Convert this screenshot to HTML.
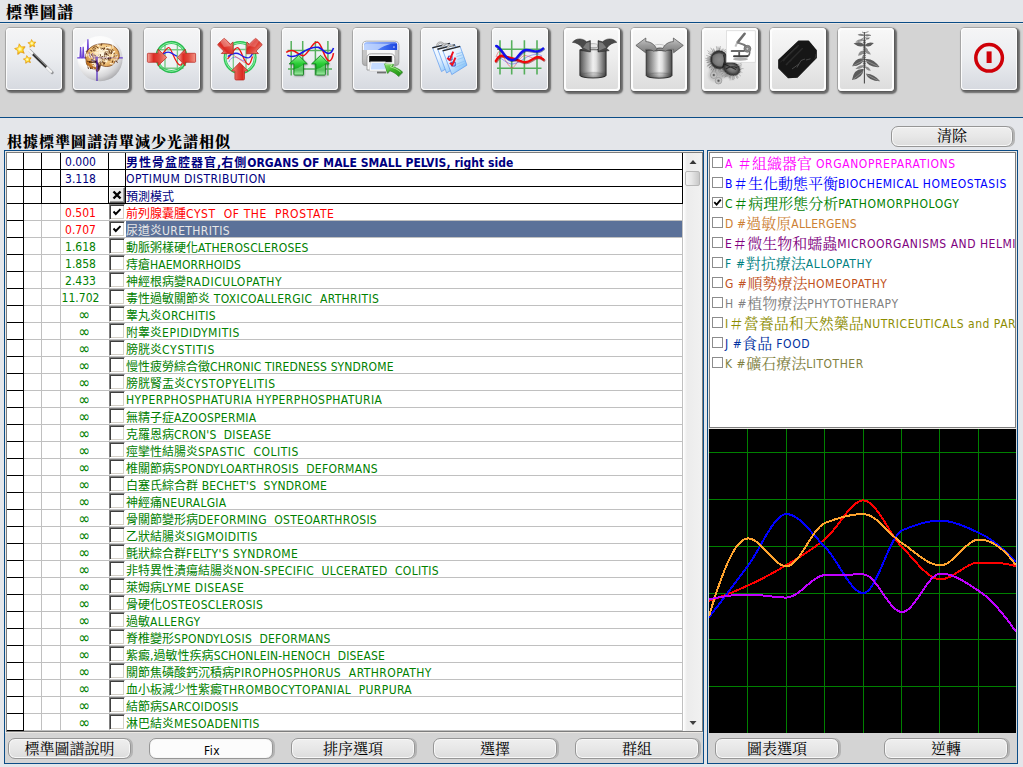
<!DOCTYPE html>
<html lang="zh-Hant"><head><meta charset="utf-8"><title>標準圖譜</title>
<style>
*{box-sizing:border-box;margin:0;padding:0}
html,body{width:1023px;height:767px;overflow:hidden}
body{background:#e4e6ea;font-family:"Liberation Sans","Noto Sans CJK TC",sans-serif;position:relative}
.abs{position:absolute}
#title{position:absolute;left:6px;top:2px;font:900 16px/22px "Liberation Serif","Noto Serif CJK SC",serif;color:#000;letter-spacing:1px;white-space:nowrap}
#sub{position:absolute;left:7px;top:131px;font:900 15px/22px "Liberation Serif","Noto Serif CJK SC",serif;color:#000;letter-spacing:1px;white-space:nowrap}
#l1{position:absolute;left:0;top:22px;width:1023px;height:1px;background:#0b4c86}
#l1b{position:absolute;left:0;top:23px;width:1023px;height:1px;background:#e9e6e3}
#tb{position:absolute;left:0;top:24px;width:1023px;height:93px;background:#d4d4d4}
#l2{position:absolute;left:0;top:117px;width:1023px;height:1px;background:#0b4c86}
.tbtn{position:absolute;top:28px;width:56px;height:62px;border-radius:4px;background:linear-gradient(#f5f5f6,#eceef1 45%,#d6d9e0);box-shadow:inset 0 0 0 1px #fcfcfc,0 0 0 1px rgba(0,0,0,.13),1.5px 1.5px 1.5px 1px rgba(0,0,0,.5)}
.tbtn.gr{height:63px;background:linear-gradient(#f8f8f8,#eeeeee 45%,#dcdcdc);box-shadow:inset 0 0 0 2px #fdfdfd,0 0 0 1px rgba(0,0,0,.15),1.5px 1.5px 1.5px 1px rgba(0,0,0,.5)}
.tbtn svg{position:absolute;left:0;top:0}
.btn{position:absolute;height:21px;border:1px solid #969696;border-radius:7px;background:linear-gradient(#efefef,#e7e7e7 50%,#dcdcdc);box-shadow:2px 0 0 #b4b4b4, inset 0 0 0 1px #f8f8f8;font:15px/19px "Liberation Serif","Noto Serif CJK SC",serif;text-align:center;color:#000;white-space:nowrap}
.btn.bb{line-height:21px}
.btn.fix{background:#fcfcfc;font:12px/24px "DejaVu Sans Condensed","DejaVu Sans","Liberation Sans",sans-serif;font-stretch:condensed;padding-left:2px;letter-spacing:.5px}
.panel{position:absolute;top:150px;height:614px;border:1px solid #0b4c86;background:#d4d4d4;overflow:hidden}
#lp{left:4px;width:700px}
#rp{left:707px;width:311px}
.sunk{position:absolute;border:1px solid #7d7d7d;box-shadow:0 0 0 1px #ebe8e4;background:#fff;overflow:hidden}
/* grid */
#grid{left:1px;top:1px;width:697px;height:580px}
.r{position:absolute;left:0;width:676px;height:17px;border-bottom:1px solid #c0c0c0;white-space:nowrap}
.r::before{content:"";position:absolute;left:0;top:16px;width:17px;height:1px;background:#000}
.r .n{position:absolute;left:50px;width:47px;top:1px;height:16px;font:12px/16px "DejaVu Sans Condensed","DejaVu Sans","Liberation Sans",sans-serif;font-stretch:condensed;text-align:center}
.r .n.inf{left:54px;font-size:16px;line-height:16px}
.r .t{position:absolute;left:119px;top:0;height:16px;right:0;font-size:12px;line-height:18px;overflow:hidden}
.r.sel .t{background:#5b7199;color:#e8e8e8}
.r.bold .t{font-weight:bold}
.l{font-family:"DejaVu Sans Condensed","DejaVu Sans","Liberation Sans",sans-serif;font-stretch:condensed;font-size:12px}
.c{font-family:"Noto Sans CJK TC",sans-serif;font-size:12px}
.r.bold .c{font-family:"Noto Sans CJK TC",sans-serif;font-weight:bold;letter-spacing:1px}
.vl{position:absolute;top:0;width:1px}
.cb{position:absolute;left:102px;top:0;width:16px;height:16px;background:#fff;border-top:1px solid #808080;border-left:1px solid #808080;border-right:1px solid #fff;border-bottom:1px solid #fff;box-shadow:inset 1px 1px 0 #404040, inset -1px -1px 0 #d4d0c8}
.cb svg{position:absolute;left:1px;top:1px}
.xb{position:absolute;left:102px;top:0;width:16px;height:16px;background:#ececec;border-top:1px solid #fff;border-left:1px solid #fff;border-right:1px solid #606060;border-bottom:1px solid #606060;box-shadow:inset -1px -1px 0 #a0a0a0}
.xb svg{position:absolute;left:0;top:0}
#sb{position:absolute;left:677px;top:0;width:18px;height:578px;background:linear-gradient(90deg,#fbfbfb 0,#ececec 3px,#f1f1f1 100%)}
#thumb{position:absolute;left:1px;top:18px;width:15px;height:15px;border:1px solid #b8b8b8;border-radius:2px;background:linear-gradient(90deg,#f4f4f4,#e6e6e6 45%,#c8c8c8)}
/* categories */
#list{left:1px;top:1px;width:307px;height:276px}
.k{position:absolute;left:0;width:400px;height:20px;white-space:nowrap}
.kb{position:absolute;left:2px;top:4px;width:11px;height:11px;border:1px solid #8c8c8c;background:#fff}
.kt{position:absolute;left:15px;top:-1px;height:20px;line-height:20px;font-size:12px}
.kt .c{font-family:"Noto Serif CJK SC",serif;font-size:15px;position:relative;top:1px}
#chart{position:absolute;left:1px;top:278px;width:307px;height:304px;background:#000}
</style></head><body>
<div id="title">標準圖譜</div>
<div id="l1"></div><div id="l1b"></div><div id="tb"></div><div id="l2"></div>
<div class="tbtn" style="left:6px"><svg width="56" height="62" viewBox="0 0 56 62"><defs><radialGradient id="sg" cx=".5" cy=".5" r=".55"><stop offset="0" stop-color="#fffde0"/><stop offset=".45" stop-color="#ffe030"/><stop offset="1" stop-color="#e88a00"/></radialGradient>
<filter id="bl1" x="-30%" y="-30%" width="160%" height="160%"><feGaussianBlur stdDeviation=".7"/></filter></defs>
<path d="M23.6 22.4 L46.2 44.6" stroke="#000" stroke-opacity=".35" stroke-width="3" stroke-linecap="round" filter="url(#bl1)"/>
<path d="M22.3 21.6 L45 43.6" stroke="#f4f4f4" stroke-width="2.6" stroke-linecap="round"/>
<path d="M27 26.2 L40.4 39.2" stroke="#2e2e2e" stroke-width="2.5"/>
<path d="M27.5 25.7 L40.9 38.7" stroke="#9a9a9a" stroke-width=".8"/>
<g filter="url(#bl1)" opacity=".5"><path d="M13.49 16.09 L15.73 19.28 L19.62 19.08 L17.27 22.19 L18.67 25.83 L14.99 24.56 L11.96 27.01 L12.03 23.11 L8.76 20.99 L12.49 19.85 Z" fill="#c08000"/><path d="M25.83 11.72 L27.28 14.20 L30.16 14.32 L28.25 16.47 L29.02 19.25 L26.38 18.09 L23.99 19.69 L24.27 16.82 L22.01 15.03 L24.82 14.42 Z" fill="#c08000"/><path d="M21.05 27.77 L22.72 30.11 L25.60 29.98 L23.88 32.29 L24.89 34.99 L22.16 34.07 L19.92 35.86 L19.95 32.99 L17.54 31.40 L20.29 30.54 Z" fill="#c08000"/></g>
<path d="M13.11 15.69 L15.28 18.87 L19.13 18.62 L16.77 21.68 L18.20 25.26 L14.57 23.96 L11.60 26.42 L11.72 22.57 L8.46 20.51 L12.16 19.42 Z" fill="url(#sg)" stroke="#e79a10" stroke-width=".5"/>
<path d="M25.53 11.42 L26.93 13.89 L29.77 13.96 L27.85 16.05 L28.66 18.77 L26.07 17.59 L23.74 19.20 L24.06 16.38 L21.81 14.66 L24.59 14.09 Z" fill="url(#sg)" stroke="#e79a10" stroke-width=".5"/>
<path d="M20.67 27.46 L22.28 29.80 L25.11 29.63 L23.38 31.88 L24.42 34.52 L21.75 33.57 L19.56 35.37 L19.63 32.54 L17.24 31.02 L19.96 30.21 Z" fill="url(#sg)" stroke="#e79a10" stroke-width=".5"/>
</svg></div>
<div class="tbtn" style="left:73px"><svg width="56" height="62" viewBox="0 0 56 62"><defs><radialGradient id="sp2" cx=".36" cy=".28" r=".85"><stop offset="0" stop-color="#ffffff"/><stop offset=".5" stop-color="#fbfbfb"/><stop offset=".75" stop-color="#d4d4d6"/><stop offset="1" stop-color="#8e8e92"/></radialGradient>
<radialGradient id="br2" cx=".5" cy=".38" r=".68"><stop offset="0" stop-color="#fffaea"/><stop offset=".45" stop-color="#f6cf8c"/><stop offset=".8" stop-color="#d08a38"/><stop offset="1" stop-color="#8a4812"/></radialGradient>
<filter id="bl2" x="-30%" y="-30%" width="160%" height="160%"><feGaussianBlur stdDeviation=".45"/></filter></defs>
<circle cx="27" cy="30.7" r="22.6" fill="url(#sp2)"/>
<path d="M4.2 29.9 H7 L7.6 19 L8.3 29.9 H9.6 L10.2 18.7 L10.9 29.9 H14.2 L14.9 11.3 L15.7 29.9 H20 M44.5 29.9 H49.8" fill="none" stroke="#5a2cd0" stroke-width="1.2" opacity=".9"/>
<g filter="url(#bl2)">
<path d="M13 32 C11.5 27 14 21.5 19 18.5 C24 15.5 31 15 37 16.5 C43 18 46.5 23 46.3 28 C46.2 31 44.5 32.8 42 33 C41.5 36.5 38 38.5 33.5 38.5 C31 38.5 29 37.8 27.5 37 C27.3 39 26.5 42 25 43.5 L23 43 C23.5 42 23.5 41.5 23 41 C19 41.5 15 39.5 13.8 36.5 C13.2 35 13 33.5 13 32 Z" fill="url(#br2)" stroke="#5a2404" stroke-width=".6"/>
<path d="M28.0 29.3 Q29.1 29.0 30.1 28.3M19.7 28.3 Q17.5 26.6 17.8 26.2M16.8 34.8 Q18.0 35.5 16.3 33.3M34.3 30.5 Q34.8 29.9 35.1 31.8M19.9 22.3 Q20.8 23.6 22.1 22.8M30.1 31.1 Q28.7 30.4 27.5 31.1M40.0 32.6 Q39.0 32.1 39.3 34.3M37.8 25.8 Q39.7 26.0 39.0 24.0M42.2 27.3 Q42.0 27.6 44.4 27.1M38.1 22.9 Q40.4 24.2 39.9 24.0M17.7 22.4 Q19.2 21.9 18.9 23.4M31.3 26.8 Q30.7 28.6 32.3 29.4M17.6 26.3 Q19.3 28.1 18.1 28.2M23.4 36.5 Q24.8 37.9 24.0 38.6M17.1 38.8 Q18.2 39.2 17.6 40.7M23.2 18.6 Q23.5 19.6 25.3 20.0M25.5 27.0 Q26.9 27.8 27.8 26.4M19.7 20.4 Q20.1 18.7 22.1 18.8M20.1 37.9 Q20.8 35.9 22.0 36.2M15.2 38.2 Q14.6 40.5 15.4 40.9M32.5 23.5 Q31.8 23.9 33.7 25.9M31.3 35.8 Q31.8 34.2 29.8 34.5M14.5 22.9 Q12.8 22.8 13.0 23.5M31.7 19.9 Q32.2 21.5 29.8 22.2M35.4 29.9 Q34.5 31.7 36.4 31.1M28.9 33.1 Q27.0 34.7 27.6 36.0M36.8 32.5 Q36.8 31.6 37.7 29.5M26.9 34.4 Q28.1 33.1 28.5 32.5M32.1 30.4 Q34.7 32.2 34.3 31.6M36.6 25.5 Q36.3 25.3 36.3 23.1M16.6 33.5 Q17.8 32.9 19.1 34.0M35.6 27.9 Q33.8 25.5 33.3 25.9M23.3 31.9 Q24.8 33.3 23.9 33.6M27.7 36.6 Q26.2 37.6 26.5 38.9M41.3 25.5 Q39.3 24.9 39.5 24.4M22.6 20.7 Q20.8 20.8 20.7 21.3M33.4 27.9 Q34.3 29.1 32.2 30.5M36.0 29.6 Q34.0 29.8 34.9 32.2M28.1 17.5 Q27.5 15.3 29.0 15.9M33.5 26.8 Q33.5 27.2 31.7 24.9M35.2 21.4 Q32.9 21.4 33.4 21.7M36.1 20.9 Q36.6 22.0 35.8 23.0M33.0 33.6 Q33.2 33.3 30.8 35.4M42.9 32.9 Q44.1 34.9 44.5 34.5M25.7 29.5 Q28.0 28.4 27.7 27.5M34.2 21.5 Q34.4 20.7 33.7 18.7" fill="none" stroke="#4a1c02" stroke-width=".9" opacity=".9" stroke-linecap="round"/><path d="M33.3 33.3 Q34.5 33.1 34.2 30.3M14.9 27.2 Q17.3 25.6 17.3 26.3M28.5 22.4 Q25.9 21.2 26.2 21.8M22.7 37.2 Q23.6 35.2 22.8 35.4M33.1 19.8 Q33.8 19.0 36.1 19.8M23.0 38.2 Q20.8 39.2 20.4 37.5M41.7 23.6 Q40.1 23.0 40.6 24.9M23.3 30.3 Q24.2 29.7 26.0 30.3M39.4 27.6 Q39.5 27.3 38.4 29.7M37.2 35.6 Q38.3 36.0 40.1 35.9M19.6 38.0 Q21.4 40.7 20.5 40.6M24.7 24.8 Q22.1 25.3 21.9 24.4M15.1 37.8 Q16.3 39.6 16.9 38.9M24.5 37.3 Q23.0 36.1 22.6 36.8M44.6 28.7 Q44.1 30.2 43.0 29.8M28.1 26.3 Q28.2 26.8 31.0 27.3M40.0 19.9 Q40.2 19.2 39.6 16.8M17.3 26.6 Q17.6 27.6 19.0 28.9M44.3 27.0 Q42.8 26.5 41.5 27.2M26.5 20.2 Q26.8 21.7 24.2 22.4M29.5 24.4 Q31.2 26.1 31.1 25.5M25.2 34.3 Q25.9 33.7 25.6 31.6M25.3 32.5 Q25.9 34.2 24.8 34.8M23.1 37.8 Q20.9 36.9 21.6 35.8M21.8 31.8 Q20.8 33.0 19.0 32.4M24.8 31.2 Q24.2 30.7 24.6 28.3M41.0 32.1 Q42.6 32.0 44.1 31.7M19.2 35.4 Q20.8 35.6 21.3 34.5M36.6 20.8 Q37.4 19.3 37.1 18.3M33.3 34.0 Q31.0 32.0 31.6 32.0M27.7 31.3 Q28.3 31.2 28.2 33.9M28.6 22.0 Q28.9 21.3 30.2 22.6M28.4 25.4 Q26.7 25.8 26.5 23.8M14.0 25.9 Q12.7 28.0 13.6 28.1M25.6 17.8 Q25.1 16.8 24.3 16.7M39.4 26.2 Q39.5 23.9 40.4 23.8M32.5 29.4 Q34.3 28.5 35.5 28.6M17.3 29.4 Q17.1 30.0 16.0 28.3M25.7 26.5 Q27.2 27.1 25.9 28.5M32.5 22.7 Q33.4 22.0 34.8 22.4" fill="none" stroke="#fff6e0" stroke-width="1.1" opacity=".95" stroke-linecap="round"/><path d="M32.4 26.3 Q30.6 26.0 30.7 26.0M20.9 27.0 Q22.3 26.9 22.5 27.3M29.9 33.2 Q30.2 34.0 28.9 34.4M34.4 30.7 Q36.2 30.1 36.5 30.3M31.7 31.5 Q31.3 32.9 31.1 33.0M32.3 26.8 Q30.8 25.6 31.2 25.4M39.3 21.3 Q38.5 21.2 40.5 22.4M31.8 35.1 Q30.6 35.4 30.7 36.9M38.1 29.1 Q38.9 30.5 38.0 30.8M39.7 22.2 Q38.5 23.1 36.7 21.4M19.2 38.5 Q18.8 39.8 21.3 39.2M37.2 24.6 Q37.4 23.2 39.3 24.3M28.4 21.3 Q29.0 19.5 31.3 20.1M30.4 20.7 Q28.3 20.1 27.6 20.0M41.9 26.8 Q42.0 29.2 40.3 29.3M35.3 26.1 Q35.2 23.9 34.3 23.4" fill="none" stroke="#3a1402" stroke-width=".7" opacity=".7" stroke-linecap="round"/>
<path d="M22 33 C24 34.5 26 37 25 41" fill="none" stroke="#2a0c02" stroke-width="1.5" opacity=".8"/>
<path d="M18 31.5 C20 33 23 33.5 25.5 36 C26.5 37.5 26 40 25 42" fill="none" stroke="#2a1040" stroke-width="2" opacity=".55"/>
<path d="M14 33 C15 37 18 39.5 22.5 40" fill="none" stroke="#b86414" stroke-width="2.2" opacity=".6"/>
<path d="M14 33 C17 35 21 35 24 33.5" fill="none" stroke="#2a0c02" stroke-width=".9" opacity=".7"/>
</g>
<path d="M24 28.5 V53" fill="none" stroke="#4a22c0" stroke-width="1.3" opacity=".9"/>
<path d="M20 29.9 H44.5" stroke="#4a22c0" stroke-width=".9" opacity=".35"/>
<path d="M16 24 L17.5 29.9 M19.5 25 L20.5 31 M22 27 L23 33" stroke="#4a22c0" stroke-width=".8" opacity=".6"/>
</svg></div>
<div class="tbtn" style="left:144px"><svg width="56" height="62" viewBox="0 0 56 62"><defs><linearGradient id="rg3" x1="0" y1="0" x2="1" y2="0"><stop offset="0" stop-color="#f4a89c"/><stop offset=".32" stop-color="#dc2a22"/><stop offset=".6" stop-color="#e0483c"/><stop offset="1" stop-color="#f39486"/></linearGradient>
<linearGradient id="rh3" x1="0" y1="0" x2="0" y2="1"><stop offset="0" stop-color="#fff" stop-opacity=".55"/><stop offset=".5" stop-color="#fff" stop-opacity="0"/></linearGradient>
<filter id="bl3" x="-30%" y="-30%" width="160%" height="160%"><feGaussianBlur stdDeviation=".5"/></filter></defs>
<circle cx="27.4" cy="29" r="14.5" fill="#f2f4f5" fill-opacity=".75" stroke="#2cc656" stroke-width="2.9"/>
<circle cx="27.4" cy="29" r="14.3" fill="none" stroke="#a4f4b6" stroke-width="1" opacity=".85"/>
<circle cx="27.4" cy="29" r="15.8" fill="none" stroke="#18983a" stroke-width=".5" opacity=".7"/>
<path d="M21 16.5V41.5M33.4 16V42M14.5 21.7H40.5M15.5 40.2H39.5" stroke="#48b85a" stroke-width="1.4" opacity=".7"/>
<path d="M18.8 25.6 C21 23 23 19.5 24.8 19.5 C27.5 19.5 31 36 36 37.2 C37 37.4 37.8 36 38.2 35" fill="none" stroke="#f01010" stroke-width="1.2"/>
<path d="M19.2 26 C21.5 24.2 24.5 23.8 26.5 24.6 C29 25.6 31 27.6 33 28.2" fill="none" stroke="#2020e8" stroke-width="1.3"/>
<path d="M3.4 26 Q3.4 25.3 4.2 25.3 H14 V21.2 L22.8 29.4 L14 37.8 V34.3 H4.2 Q3.4 34.3 3.4 33.5 Z" fill="url(#rg3)" stroke="#b82018" stroke-width=".7"/>
<path d="M4 25.8 H14.5 V22.5 L21.8 29.4 H4 Z" fill="url(#rh3)"/>
<path d="M51.6 26 Q51.6 25.3 50.8 25.3 H41.2 V21.2 L33.4 29.4 L41.2 37.8 V34.3 H50.8 Q51.6 34.3 51.6 33.5 Z" fill="url(#rg3)" stroke="#b82018" stroke-width=".7"/>
<path d="M51 25.8 H40.7 V22.5 L34.4 29.4 H51 Z" fill="url(#rh3)"/>
</svg></div>
<div class="tbtn" style="left:211px"><svg width="56" height="62" viewBox="0 0 56 62"><defs><linearGradient id="rg4" x1="0" y1="0" x2="1" y2="0"><stop offset="0" stop-color="#f4a89c"/><stop offset=".32" stop-color="#dc2a22"/><stop offset=".6" stop-color="#e0483c"/><stop offset="1" stop-color="#f39486"/></linearGradient>
<linearGradient id="rh4" x1="0" y1="0" x2="0" y2="1"><stop offset="0" stop-color="#fff" stop-opacity=".55"/><stop offset=".5" stop-color="#fff" stop-opacity="0"/></linearGradient>
<filter id="bl4" x="-30%" y="-30%" width="160%" height="160%"><feGaussianBlur stdDeviation=".5"/></filter></defs>
<circle cx="29.1" cy="29.6" r="15.1" fill="#f2f4f5" fill-opacity=".7" stroke="#2cc656" stroke-width="2.9"/>
<circle cx="29.1" cy="29.6" r="14.9" fill="none" stroke="#a4f4b6" stroke-width="1" opacity=".85"/>
<path d="M22.3 16V42M35 16V42M22 21.5H36" stroke="#48b85a" stroke-width="1.3" opacity=".7"/>
<path d="M16.5 31 C20 28 23 19.6 26.5 19.6 C30 19.6 33 36 37.5 36.5 C39.5 36.5 40.5 31 41.5 28.5" fill="none" stroke="#f01010" stroke-width="1.3"/>
<path d="M16.8 28.5 C21 25.5 26 24.5 29 26.5 C32 28.5 36 31 38.5 29.5 C40 28.5 41 27 41.5 25.5" fill="none" stroke="#2020e8" stroke-width="1.4"/>
<path d="M18 34 C19 30 23 28.5 26 29.5 C29 30.5 31 33 34 33" fill="none" stroke="#5050f0" stroke-width=".8" opacity=".7"/>
<path d="M23 27.5 L34 35" stroke="#f05050" stroke-width=".8" opacity=".8"/>
<g id="a4"><path d="M-4.8 -16.4 Q-4.8 -17.6 -3.6 -17.6 H3.6 Q4.8 -17.6 4.8 -16.4 V-8.6 H8.2 L0 0 L-8.2 -8.6 H-4.8 Z" transform="translate(28.7 34.4) rotate(180)" fill="url(#rg4)" stroke="#b82018" stroke-width=".7"/></g>
<path d="M-4.8 -16.4 Q-4.8 -17.6 -3.6 -17.6 H3.6 Q4.8 -17.6 4.8 -16.4 V-8.6 H8.2 L0 0 L-8.2 -8.6 H-4.8 Z" transform="translate(22.2 25.8) rotate(-45)" fill="url(#rg4)" stroke="#b82018" stroke-width=".7"/>
<path d="M-4.8 -16.4 Q-4.8 -17.6 -3.6 -17.6 H3.6 Q4.8 -17.6 4.8 -16.4 V-8.6 H8.2 L0 0 L-8.2 -8.6 H-4.8 Z" transform="translate(35.6 25.8) rotate(45)" fill="url(#rg4)" stroke="#b82018" stroke-width=".7"/>
<path d="M7 10 L12 8.5 L20 18 L13 19 Z" fill="#fff" opacity=".25"/><path d="M50 10 L45 8.5 L37 18 L44 19 Z" fill="#fff" opacity=".2"/>
</svg></div>
<div class="tbtn" style="left:282px"><svg width="56" height="62" viewBox="0 0 56 62"><defs><linearGradient id="gg5" x1="0" y1="0" x2="0" y2="1"><stop offset="0" stop-color="#9af59a"/><stop offset=".4" stop-color="#2fd03a"/><stop offset=".75" stop-color="#0fa81c"/><stop offset="1" stop-color="#7ee884"/></linearGradient>
<filter id="bl5" x="-30%" y="-30%" width="160%" height="160%"><feGaussianBlur stdDeviation=".8"/></filter></defs>
<path d="M9.2 13V47.6M20.7 13V47.6M33.4 13V47.6M45.9 13V47.6M5.5 22.5H50M6 41H50" stroke="#3da644" stroke-width="1.5" opacity=".85"/>
<path d="M4.2 24.3 C7 22.5 10 21.8 13 23.5 C16 25.2 19 28 21.4 27.7 C26 27 30 14 35.2 14 C40 14.5 42 32 47.2 32.9 C49.5 33 50.8 29 51.5 25.2" fill="none" stroke="#f01010" stroke-width="1.5"/>
<path d="M5.4 27.2 C8 29 11 28.8 14 27.8 C19 26 24 21.5 28 20.5 C31 19.6 34 18.8 36.5 19.4 C40 20.3 43 25.5 46.5 25.5 C49.5 25.3 50.8 22 51.5 20" fill="none" stroke="#1818e8" stroke-width="1.6"/>
<g filter="url(#bl5)" opacity=".45"><path d="M17.2 28.5 L26 37 H22 V48 H12.5 V37 H7.8 Z M39.2 28.5 L48 37 H44 V48 H34.5 V37 H30.2 Z" fill="#000"/></g>
<path d="M16.6 27.3 L25.3 35.9 H21.4 V46.2 Q21.4 47 20.6 47 H12.7 Q11.9 47 11.9 46.2 V35.9 H7.2 Z" fill="url(#gg5)" stroke="#12801e" stroke-width=".9"/>
<path d="M38.6 27.3 L47.2 35.9 H43.3 V46.2 Q43.3 47 42.5 47 H34.7 Q33.9 47 33.9 46.2 V35.9 H29.6 Z" fill="url(#gg5)" stroke="#12801e" stroke-width=".9"/>
<path d="M12.5 41 Q17 40 21 37 V46.5 H12.5 Z M34.5 41 Q39 40 43 37 V46.5 H34.5 Z" fill="#fff" opacity=".3"/>
</svg></div>
<div class="tbtn" style="left:353px"><svg width="56" height="62" viewBox="0 0 56 62"><defs><linearGradient id="pb6" x1="0" y1="0" x2="0" y2="1"><stop offset="0" stop-color="#ffffff"/><stop offset=".7" stop-color="#f4f4f4"/><stop offset="1" stop-color="#c8c8c8"/></linearGradient>
<linearGradient id="bt6" x1="0" y1="0" x2="1" y2="0"><stop offset="0" stop-color="#8fb4ff"/><stop offset=".5" stop-color="#4a78f4"/><stop offset="1" stop-color="#1a44e0"/></linearGradient>
<linearGradient id="ar6" x1="0" y1="0" x2="1" y2="1"><stop offset="0" stop-color="#8ae070"/><stop offset=".5" stop-color="#3cb428"/><stop offset="1" stop-color="#1e8a14"/></linearGradient>
<filter id="bl6" x="-30%" y="-30%" width="160%" height="160%"><feGaussianBlur stdDeviation=".7"/></filter></defs>
<path d="M24 43.5 H33 V45.4 H24 Z" fill="#555" filter="url(#bl6)" opacity=".8"/>
<path d="M9.4 17.5 Q9.4 13.2 13.6 13.2 H41.6 Q45.9 13.2 45.9 17.5 V34.6 Q45.9 37.6 42.9 37.6 H12.4 Q9.4 37.6 9.4 34.6 Z" fill="url(#pb6)" stroke="#9c9c9c" stroke-width=".8"/>
<path d="M9.4 22 V34.6 Q9.4 37.6 12.4 37.6 H14 V22 Z M45.9 22 V34.6 Q45.9 37.6 42.9 37.6 H41.8 V22 Z" fill="#8a8a8a" opacity=".45"/>
<path d="M11.2 16.6 Q11.2 14 13.8 14 H41.6 Q44.2 14 44.2 16.6 V22 H11.2 Z" fill="url(#bt6)"/>
<path d="M11.2 18 Q11.2 15.8 13.8 15.8 H38 C34 17 29 18.5 24.5 22 H11.2 Z" fill="#cfe0ff" opacity=".75"/>
<path d="M11.6 14.9 H43.8" stroke="#e8f0ff" stroke-width=".7" opacity=".8"/>
<rect x="40.3" y="18.4" width="1.3" height="1.3" fill="#e8e8f8"/>
<path d="M14 30.2 Q14 25.8 18.4 25.8 H37.4 Q41.8 25.8 41.8 30.2 V42 H14 Z" fill="#fafafa" stroke="#8e8e8e" stroke-width=".8"/>
<rect x="16.2" y="28" width="22.6" height="6" fill="#0c0c0c"/>
<path d="M16.2 34 H38.8 V28" fill="none" stroke="#555" stroke-width=".5"/>
<path d="M17.5 33.8 H32.4 L33.6 43 H16.4 Z" fill="#fff" stroke="#b8b8b8" stroke-width=".5"/>
<path d="M18.6 35 H31.5 L32.3 41.6 H17.8 Z" fill="#c6dcff"/>
<path d="M31.4 35.8 L41 36.4 L39 38.6 C42.8 39.4 46.6 41 49.6 44 L45.4 48.2 C42.8 45.4 39.8 43.6 36.6 42.6 L34.4 45.4 Z" fill="#0a4a08" opacity=".45" filter="url(#bl6)" transform="translate(.5 .7)"/>
<path d="M31.4 35.8 L41 36.4 L39 38.6 C42.8 39.4 46.6 41 49.6 44 L45.4 48.2 C42.8 45.4 39.8 43.6 36.6 42.6 L34.4 45.4 Z" fill="url(#ar6)" stroke="#2a8a1c" stroke-width=".5"/>
<path d="M32.2 36.6 L39 36.8 L37.4 38.9 C41 39.8 44.5 41.2 47.6 44 " fill="none" stroke="#c8f8b0" stroke-width=".9" opacity=".8"/>
</svg></div>
<div class="tbtn" style="left:421px"><svg width="56" height="62" viewBox="0 0 56 62"><defs><linearGradient id="pg7" x1="0" y1="0" x2="1" y2="1"><stop offset="0" stop-color="#ffffff"/><stop offset=".4" stop-color="#e6f2ff"/><stop offset="1" stop-color="#62b2f6"/></linearGradient></defs>
<g transform="translate(-10.3 -3.0)"><path d="M21.8 22.5 L39 18.2 L45.9 37.2 L30.8 46.6 Z" fill="url(#pg7)" stroke="#5a98ee" stroke-width=".7"/><path d="M21.4 22.2 L39 17.8 L39.4 19 L21.9 23.6 Z" fill="#2a2a2a"/><path d="M25.8 20.8 C25.8 17 30.5 15.2 33.5 18.8 L32 19.3 C30.5 17.4 27.8 18.2 27.6 20.4 Z" fill="#d0d0d0" stroke="#8a8a8a" stroke-width=".5"/></g><g transform="translate(-5.2 -1.6)"><path d="M21.8 22.5 L39 18.2 L45.9 37.2 L30.8 46.6 Z" fill="url(#pg7)" stroke="#5a98ee" stroke-width=".7"/><path d="M21.4 22.2 L39 17.8 L39.4 19 L21.9 23.6 Z" fill="#2a2a2a"/><path d="M25.8 20.8 C25.8 17 30.5 15.2 33.5 18.8 L32 19.3 C30.5 17.4 27.8 18.2 27.6 20.4 Z" fill="#d0d0d0" stroke="#8a8a8a" stroke-width=".5"/></g><g transform="translate(0.0 0.0)"><path d="M21.8 22.5 L39 18.2 L45.9 37.2 L30.8 46.6 Z" fill="url(#pg7)" stroke="#5a98ee" stroke-width=".7"/><path d="M21.4 22.2 L39 17.8 L39.4 19 L21.9 23.6 Z" fill="#2a2a2a"/><path d="M25.8 20.8 C25.8 17 30.5 15.2 33.5 18.8 L32 19.3 C30.5 17.4 27.8 18.2 27.6 20.4 Z" fill="#d0d0d0" stroke="#8a8a8a" stroke-width=".5"/><path d="M35 26.2 L41.5 24.2 M35.5 28.6 L42.3 26.5 M36.5 31.5 L43.2 29.3 M33.5 37 L44.8 32.6 M34.2 39.5 L45.2 35" stroke="#8ec4f4" stroke-width=".9" opacity=".9"/></g>
<path d="M27.4 28.2 H31 V32 H27.4 Z M30.4 34.2 H34.2 V38 H30.4 Z" fill="none" stroke="#2a3cb8" stroke-width=".9"/>
<path d="M26.2 30 L28.8 32 L32.2 23.6 M28.8 35 L31.4 36.8 L34.4 29.6" fill="none" stroke="#f01020" stroke-width="1.9" stroke-linejoin="miter"/>
</svg></div>
<div class="tbtn" style="left:492px"><svg width="56" height="62" viewBox="0 0 56 62"><defs><filter id="bl8" x="-30%" y="-30%" width="160%" height="160%"><feGaussianBlur stdDeviation=".7"/></filter></defs>
<path d="M8 12.2V46.6M19.7 12.2V46.6M32.4 12.2V46.6M45 12.2V46.6M5 21.2H49.5M5 40.2H49.5" stroke="#3da644" stroke-width="1.6" opacity=".85"/>
<path d="M4 29 C6 24 7 22 9 24 C12 30 17 39.5 20 40 C23 40 28 27.5 33 27.5 C38 28 42 32 46 31 C48 30.5 49 29 50 28" fill="none" stroke="#f04040" stroke-width=".8" opacity=".65"/>
<path d="M5 28.5 C10 30 15 36 20 36 C26 36 32 30 37 28 C42 26 47 26 50 28" fill="none" stroke="#4040f0" stroke-width=".8" opacity=".6"/>
<path d="M3.8 33 C5.5 30 7.5 27.6 9.5 27.6 C13 27.8 17 30 20.5 30.5 C26 31.5 29 34.2 33.5 34.2 C38 34.2 42 29 45.5 29 C48.5 29 50 30.5 51.5 31.6" fill="none" stroke="#7a0000" stroke-width="2.6" stroke-linecap="round" opacity=".5" filter="url(#bl8)" transform="translate(.6 .8)"/>
<path d="M3.8 33 C5.5 30 7.5 27.6 9.5 27.6 C13 27.8 17 30 20.5 30.5 C26 31.5 29 34.2 33.5 34.2 C38 34.2 42 29 45.5 29 C48.5 29 50 30.5 51.5 31.6" fill="none" stroke="#f00808" stroke-width="2.3" stroke-linecap="round"/>
<path d="M4.2 17.8 C8 18.5 12 28 16 30.5 C19 32.5 22 32.5 24.5 30 C27.5 26.5 30 22.5 33.5 22 C38 21.4 42 24 45.5 23.4 C48.5 22.8 50 21.5 51 20.4" fill="none" stroke="#000060" stroke-width="2.6" stroke-linecap="round" opacity=".5" filter="url(#bl8)" transform="translate(.6 .8)"/>
<path d="M4.2 17.8 C8 18.5 12 28 16 30.5 C19 32.5 22 32.5 24.5 30 C27.5 26.5 30 22.5 33.5 22 C38 21.4 42 24 45.5 23.4 C48.5 22.8 50 21.5 51 20.4" fill="none" stroke="#1010f0" stroke-width="2.3" stroke-linecap="round"/>
</svg></div>
<div class="tbtn gr" style="left:564px"><svg width="56" height="62" viewBox="0 0 56 62"><defs><linearGradient id="cy9" x1="0" y1="0" x2="1" y2="0"><stop offset="0" stop-color="#505050"/><stop offset=".12" stop-color="#7a7a7a"/><stop offset=".5" stop-color="#f0f0f0"/><stop offset=".62" stop-color="#e0e0e0"/><stop offset=".9" stop-color="#707070"/><stop offset="1" stop-color="#4a4a4a"/></linearGradient>
<linearGradient id="cb9" x1="0" y1="0" x2="0" y2="1"><stop offset="0" stop-color="#000" stop-opacity="0"/><stop offset=".75" stop-color="#000" stop-opacity="0"/><stop offset="1" stop-color="#000" stop-opacity=".35"/></linearGradient>
<filter id="bl9" x="-30%" y="-30%" width="160%" height="160%"><feGaussianBlur stdDeviation=".45"/></filter></defs><path d="M15.9 21.7 V47.4 A13.1 2.6 0 0 0 42.1 47.4 V21.7 Z" fill="url(#cy9)" stroke="#2e2e2e" stroke-width=".9"/><path d="M15.9 21.7 V47.4 A13.1 2.6 0 0 0 42.1 47.4 V21.7 Z" fill="url(#cb9)"/><path d="M16.4 47.4 A12.6 2.6 0 0 1 41.6 47.4" fill="none" stroke="#555" stroke-width=".5" opacity=".6"/>
<ellipse cx="29" cy="18" rx="5" ry="2.4" fill="#e8e8e8" stroke="#8a8a8a" stroke-width=".5"/>
<path d="M25 19.5 H33 M25 21.3 H33" stroke="#9a9a9a" stroke-width=".7"/>
<g filter="url(#bl9)">
<path d="M8.4 14.3 C12 10.2 18 9.6 22.6 13.8 L26.4 12.6 V24 L16.4 22.4 L18.6 20.4 C16 16.4 12 14.6 8.4 14.3 Z" fill="#4a4a4a" stroke="#1e1e1e" stroke-width=".5"/>
<path d="M19 19.6 L25.6 22.8 V14 L22.4 15" fill="#8e8e8e" opacity=".7"/>
<path d="M52.8 14.3 C49.2 10.2 43.2 9.6 38.6 13.8 L34 12.6 V24 L45.2 22.6 L42.6 20.4 C45.2 16.4 49.2 14.6 52.8 14.3 Z" fill="#4a4a4a" stroke="#1e1e1e" stroke-width=".5"/>
<path d="M42.2 19.6 L34.8 22.8 V14 L38.6 15" fill="#8e8e8e" opacity=".7"/>
</g>
</svg></div>
<div class="tbtn gr" style="left:631px"><svg width="56" height="62" viewBox="0 0 56 62"><ellipse cx="28.2" cy="19.6" rx="7" ry="3.2" fill="#f0f0f0" stroke="#9a9a9a" stroke-width=".5"/><defs><linearGradient id="cy10" x1="0" y1="0" x2="1" y2="0"><stop offset="0" stop-color="#505050"/><stop offset=".12" stop-color="#7a7a7a"/><stop offset=".5" stop-color="#f0f0f0"/><stop offset=".62" stop-color="#e0e0e0"/><stop offset=".9" stop-color="#707070"/><stop offset="1" stop-color="#4a4a4a"/></linearGradient>
<linearGradient id="cb10" x1="0" y1="0" x2="0" y2="1"><stop offset="0" stop-color="#000" stop-opacity="0"/><stop offset=".75" stop-color="#000" stop-opacity="0"/><stop offset="1" stop-color="#000" stop-opacity=".35"/></linearGradient>
<filter id="bl10" x="-30%" y="-30%" width="160%" height="160%"><feGaussianBlur stdDeviation=".45"/></filter></defs><path d="M15.2 22.0 V47.6 A12.9 2.6 0 0 0 41.0 47.6 V22.0 Z" fill="url(#cy10)" stroke="#2e2e2e" stroke-width=".9"/><path d="M15.2 22.0 V47.6 A12.9 2.6 0 0 0 41.0 47.6 V22.0 Z" fill="url(#cb10)"/><path d="M15.7 47.6 A12.4 2.6 0 0 1 40.5 47.6" fill="none" stroke="#555" stroke-width=".5" opacity=".6"/>
<defs><linearGradient id="ag10" x1="0" y1="0" x2="0" y2="1"><stop offset="0" stop-color="#c8c8c8"/><stop offset=".5" stop-color="#9c9c9c"/><stop offset="1" stop-color="#7c7c7c"/></linearGradient></defs>
<g filter="url(#bl10)">
<path d="M4.9 17.4 L14.8 10 V13.6 C20 13.8 23.5 16.6 25.4 20.4 C26.6 20 30 20 31.6 20.6 L33.4 23 C30 22.2 25 22.4 22.5 23.2 C20.5 21.8 18 21.2 14.6 21.4 V24.8 Z" fill="url(#ag10)" stroke="#4a4a4a" stroke-width=".7"/>
<path d="M52.3 17.4 L42.4 10 V13.6 C37.2 13.8 33.7 16.6 31.8 20.4 C30.6 20 28 20 26.4 20.6 L24.6 23 C28 22.2 32.2 22.4 34.7 23.2 C36.7 21.8 39.2 21.2 42.6 21.4 V24.8 Z" fill="url(#ag10)" stroke="#4a4a4a" stroke-width=".7"/>
</g>
</svg></div>
<div class="tbtn gr" style="left:702px"><svg width="56" height="62" viewBox="0 0 56 62"><defs><radialGradient id="mb1" cx=".55" cy=".5" r=".55"><stop offset="0" stop-color="#8a8a8a"/><stop offset=".45" stop-color="#6a6a6a"/><stop offset=".8" stop-color="#2c2c2c"/><stop offset="1" stop-color="#2c2c2c" stop-opacity="0"/></radialGradient>
<radialGradient id="mb2" cx=".5" cy=".5" r=".5"><stop offset="0" stop-color="#8c8c8c"/><stop offset=".55" stop-color="#c4c4c4"/><stop offset=".85" stop-color="#b0b0b0"/><stop offset="1" stop-color="#b0b0b0" stop-opacity="0"/></radialGradient>
<filter id="bl11" x="-30%" y="-30%" width="160%" height="160%"><feGaussianBlur stdDeviation=".65"/></filter>
<filter id="bk11" x="-30%" y="-30%" width="160%" height="160%"><feGaussianBlur stdDeviation="1.1"/></filter></defs>
<ellipse cx="20" cy="37" rx="15" ry="12" fill="#8a8a8a" opacity=".38" filter="url(#bk11)" transform="rotate(28 20 37)"/>
<ellipse cx="14" cy="47" rx="8" ry="7" fill="#8a8a8a" opacity=".3" filter="url(#bk11)"/>
<g filter="url(#bl11)">
<path d="M22.5 31.3 L30.1 30.9M22.5 32.4 L27.3 33.0M22.4 32.7 L28.1 33.9M22.2 33.4 L29.2 35.7M22.2 33.5 L25.8 34.8M21.7 34.6 L26.6 37.6M21.4 35.1 L24.4 37.3M21.2 35.3 L26.6 39.8M20.9 35.7 L26.8 41.1M20.0 36.4 L22.3 39.6M20.2 36.3 L24.0 41.3M19.0 37.0 L21.3 42.0M19.0 37.0 L21.4 42.2M18.6 37.2 L20.3 41.6M17.7 37.4 L19.0 43.3M17.3 37.5 L18.0 42.3M16.7 37.6 L17.0 43.4M16.1 37.6 L15.8 41.4M15.1 37.4 L13.5 43.5M14.7 37.3 L13.2 41.6M13.8 36.9 L10.4 43.8M14.0 37.0 L11.7 41.8M13.0 36.5 L9.0 42.1M12.4 36.0 L8.6 40.1M12.1 35.6 L7.0 40.2M12.0 35.5 L7.1 39.7M11.3 34.6 L4.8 38.5M11.2 34.4 L5.5 37.4M11.1 34.2 L6.8 36.4M10.7 33.1 L5.2 34.5M10.7 33.0 L4.6 34.5M10.5 32.0 L3.7 32.5M10.5 31.7 L4.8 31.8M10.5 31.0 L3.3 30.3M10.6 30.4 L5.2 29.3M10.8 29.8 L7.0 28.7M10.8 29.6 L4.3 27.4M11.4 28.4 L5.9 25.0M11.5 28.3 L7.7 25.9M11.9 27.8 L5.5 22.5M12.4 27.2 L8.2 22.6M12.9 26.7 L10.1 22.9M13.2 26.6 L8.7 19.8M13.7 26.2 L11.0 21.1M14.0 26.1 L11.5 20.4M15.1 25.7 L14.3 22.1M15.6 25.6 L14.4 18.3M16.2 25.6 L15.9 18.5M16.8 25.6 L17.0 19.5M17.1 25.6 L17.8 19.9M17.3 25.6 L18.3 18.0M18.3 25.8 L19.7 21.4M18.8 26.0 L21.1 20.5M19.2 26.2 L21.6 21.5M19.9 26.6 L23.6 21.1M20.4 27.0 L24.2 22.5M20.5 27.1 L23.6 23.5M21.0 27.6 L25.7 23.3M21.7 28.5 L28.0 24.7M21.9 29.0 L28.6 25.7M22.0 29.1 L28.9 25.9M22.3 30.0 L26.3 28.9M22.3 30.0 L26.0 29.0M22.5 31.2 L27.4 30.9" stroke="#3a3a3a" stroke-width=".55" opacity=".6"/>
<path d="M33.5 38.0 L40.1 34.7M33.4 37.7 L36.8 35.8M33.7 38.6 L40.0 36.5M33.8 38.8 L38.5 37.5M33.9 39.1 L39.8 37.9M33.9 39.5 L38.2 38.9M34.0 39.8 L39.2 39.3M34.0 40.3 L41.6 40.6M33.9 40.9 L39.7 41.7M33.9 40.9 L38.6 41.6M33.9 41.0 L37.6 41.6M33.8 41.6 L38.5 43.1M33.7 41.9 L40.4 44.5M33.5 42.4 L38.8 44.9M33.4 42.5 L36.7 44.3M33.2 42.9 L36.7 45.2M32.9 43.3 L38.9 48.1M32.6 43.7 L35.7 46.7M32.2 44.0 L36.5 49.3M32.0 44.2 L36.3 50.0M31.7 44.4 L35.3 50.2M31.6 44.5 L35.5 50.9M30.9 44.8 L32.5 48.8M30.6 44.9 L32.8 51.0M30.5 44.9 L32.2 50.4M30.1 45.1 L31.8 52.2M29.7 45.1 L30.8 52.0M29.5 45.2 L30.1 52.3M28.7 45.2 L28.4 50.6M28.6 45.2 L28.0 52.5M28.1 45.1 L27.1 50.6M28.1 45.1 L27.2 49.9M27.4 44.9 L26.0 49.0M26.9 44.7 L24.9 49.0M26.6 44.6 L24.2 48.8M26.2 44.3 L22.6 49.7M26.2 44.3 L23.0 49.0M25.8 44.0 L22.0 48.6M25.7 43.9 L22.7 47.3M25.3 43.6 L19.9 48.6M25.0 43.2 L21.9 45.6M24.7 42.8 L19.2 46.3M24.5 42.4 L20.6 44.4M24.4 42.2 L20.9 43.7M24.3 41.9 L19.9 43.5M24.3 41.8 L17.5 44.2M24.2 41.6 L18.7 43.1M24.0 40.7 L19.4 41.1M24.0 40.8 L16.9 41.6M24.0 40.2 L17.5 40.3M24.0 40.1 L18.9 40.1M24.0 39.7 L17.7 39.0M24.1 39.4 L16.7 38.1M24.1 39.0 L17.7 37.5M24.2 38.7 L19.8 37.3M24.6 37.8 L20.8 35.8" stroke="#4a4a4a" stroke-width=".55" opacity=".5"/>
</g>
<ellipse cx="16.5" cy="31.6" rx="9.2" ry="9.6" fill="url(#mb1)" filter="url(#bl11)"/>
<ellipse cx="29.0" cy="40.2" rx="9.6" ry="7" fill="url(#mb1)" transform="rotate(25 29.0 40.2)" filter="url(#bl11)"/>
<path d="M10.5 28 C13 25 19 24.5 21.5 27 C22 31 21.5 35 20.5 38.5 C17 39 12.5 37.5 10.5 34 Z" fill="#8e8e8e" opacity=".55" filter="url(#bl11)"/>
<path d="M21.5 27 C23 31 22.5 36 20.5 39.5 M22 36 L34 41.5 M24 41 C27 38.5 32 38 35 40" stroke="#1a1a1a" stroke-width="1.1" fill="none" opacity=".8" filter="url(#bl11)"/>
<circle cx="11.8" cy="47.1" r="3.9" fill="url(#mb2)"/><circle cx="11.8" cy="47.1" r="1" fill="#5a5a5a"/>
<circle cx="16.5" cy="52.7" r="3.9" fill="url(#mb2)"/><circle cx="16.5" cy="52.7" r="1" fill="#5a5a5a"/>
<circle cx="11.8" cy="47.1" r="3.4" fill="none" stroke="#9a9a9a" stroke-width=".5"/><circle cx="16.5" cy="52.7" r="3.4" fill="none" stroke="#9a9a9a" stroke-width=".5"/>
<rect x="24.4" y="2.8" width="28.8" height="31.4" fill="#fff" stroke="#d0d0d0" stroke-width=".6"/>
<g filter="url(#bl11)">
<ellipse cx="38.5" cy="31.2" rx="7.5" ry="1.6" fill="#9a9a9a" opacity=".8"/>
<path d="M42.6 5.8 L35.4 14.6" stroke="#6e6e6e" stroke-width="2.6" stroke-linecap="round"/>
<path d="M35.6 13.6 L33.4 18.6" stroke="#c0c0c0" stroke-width="2"/>
<path d="M35 14.4 C39 15.2 43 17 46 19.6" stroke="#7a7a7a" stroke-width="1.8" fill="none"/>
<circle cx="45.4" cy="20.8" r="3.5" fill="#8a8a8a" stroke="#5a5a5a" stroke-width=".6"/><circle cx="45.4" cy="20.8" r="1.5" fill="#c8c8c8" stroke="#555" stroke-width=".5"/>
<path d="M47.6 23.4 C48 26 46.5 28 44.5 28.4" stroke="#6a6a6a" stroke-width="1.6" fill="none"/>
<path d="M29.6 23 H41.8" stroke="#3a3a3a" stroke-width="1.7" stroke-linecap="round"/>
<path d="M37.2 24 V28" stroke="#5a5a5a" stroke-width="1.8"/>
<path d="M32 28.3 H45.4" stroke="#3e3e3e" stroke-width="1.9" stroke-linecap="round"/>
</g>
</svg></div>
<div class="tbtn gr" style="left:770px"><svg width="56" height="62" viewBox="0 0 56 62"><defs><filter id="bl12" x="-30%" y="-30%" width="160%" height="160%"><feGaussianBlur stdDeviation=".5"/></filter></defs>
<g filter="url(#bl12)"><path d="M28.6 13.1 H38.5 L46.2 22.5 V29.9 L27.3 49.2 L18.2 49.6 L8.8 40.2 V32 Z" fill="#151515" stroke="#151515" stroke-width="1.2" stroke-linejoin="round"/>
<path d="M13 33 L29 17 M16 37 L33 20" stroke="#2e2e2e" stroke-width="1.6" opacity=".8"/>
<path d="M10.5 34 L27 18.5" stroke="#3c3c3c" stroke-width=".7" opacity=".8"/>
<path d="M22 41 L29 36 L31 32.5 L35 31 M29 36 L27 39.5 M36 32 L40.5 30.8" stroke="#5a5a5a" stroke-width=".8" fill="none" opacity=".9"/>
<path d="M46 26 L45 31" stroke="#3a3a3a" stroke-width=".8"/></g>
</svg></div>
<div class="tbtn gr" style="left:838px"><svg width="56" height="62" viewBox="0 0 56 62"><defs><filter id="bl13" x="-30%" y="-30%" width="160%" height="160%"><feGaussianBlur stdDeviation=".4"/></filter></defs>
<g filter="url(#bl13)">
<path d="M26.4 4 V55.5" stroke="#4c4c4c" stroke-width="1.1"/>
<path d="M26.4 12 V40" stroke="#3a3a3a" stroke-width="3" stroke-dasharray="1.4 .7" opacity=".6"/>
<path d="M26.4 17.4 Q22.8 12.3 15.6 15.6 Q21.5 20.2 26.4 17.4 Z M26.8 17.4 Q31.4 20.3 35.9 15.0 Q29.7 13.3 26.8 17.4 Z M26.0 31.1 Q17.9 28.5 14.2 38.3 Q23.9 38.4 26.0 31.1 Z M27.1 31.1 Q29.7 39.9 41.5 39.1 Q35.3 29.9 27.1 31.1 Z M25.7 41.0 Q15.8 39.9 14.0 52.1 Q25.2 49.9 25.7 41.0 Z M27.7 45.8 Q31.0 53.4 42.1 53.3 Q35.4 45.1 27.7 45.8 Z" fill="#4e4e4e" opacity=".9"/>
<path d="M26.4 23.0 Q21.5 21.6 20.0 27.7 Q25.7 27.4 26.4 23.0 Z M26.8 22.1 Q27.3 26.6 32.9 26.4 Q30.8 21.6 26.8 22.1 Z M26.4 37.6 Q21.6 35.8 17.4 41.0 Q23.8 41.5 26.4 37.6 Z M27.1 38.5 Q27.6 42.6 32.9 42.8 Q30.8 38.3 27.1 38.5 Z M26.4 7.5 Q23.9 4.7 19.5 6.6 Q23.4 9.0 26.4 7.5 Z M26.6 7.5 Q29.3 9.7 32.9 7.0 Q29.0 5.4 26.6 7.5 Z M26.4 11.8 Q22.2 9.5 17.4 13.5 Q23.2 14.8 26.4 11.8 Z M26.8 11.3 Q29.7 12.8 32.4 9.6 Q28.5 9.0 26.8 11.3 Z M26.4 26.4 Q22.5 28.6 23.8 34.2 Q27.7 30.3 26.4 26.4 Z M26.8 19.5 Q25.9 23.1 30.3 23.8 Q30.1 19.7 26.8 19.5 Z" fill="#6e6e6e" opacity=".75"/>
<path d="M25.5 32.4 L15.2 37.8 M27.3 32.4 L40.2 38.5 M25.5 43.2 L15.2 51.4 M28.1 46.2 L40.6 52.7" stroke="#c8c8c8" stroke-width=".5" fill="none" opacity=".8"/>
<path d="M26.4 5 L24 4 M26.4 5 L30.5 3.6 M26.4 7 L20.5 7 M26.4 7 L33 7.5 M26.4 9.5 L23 11.5 M26.4 9.5 L31 10.5" stroke="#6a6a6a" stroke-width=".7" fill="none"/>
</g>
</svg></div>
<div class="tbtn" style="left:961px"><svg width="56" height="62" viewBox="0 0 56 62"><circle cx="28.1" cy="29.8" r="13.3" fill="none" stroke="#cf0008" stroke-width="3.5"/>
<rect x="25.6" y="23.4" width="5" height="11.6" fill="#cf0008"/></svg></div>
<div id="sub">根據標準圖譜清單減少光譜相似</div>
<div class="btn" style="left:891px;top:126px;width:122px">清除</div>

<div class="panel" id="lp">
 <div class="sunk" id="grid">
  <div id="rows" style="position:absolute;left:0;top:0;width:677px;height:578px">
<div class="r bold" style="top:0px;color:#000080"><div class="n">0.000</div><div class="t" id="t0"><span class="c">男性骨盆腔器官</span><span class="l" style="letter-spacing:0.055px">,</span><span class="c">右側</span><span class="l" style="letter-spacing:0.055px">ORGANS OF MALE SMALL PELVIS, right side</span></div></div>
<div class="r" style="top:17px;color:#000080"><div class="n">3.118</div><div class="t" id="t1"><span class="l" style="letter-spacing:0.399px">OPTIMUM DISTRIBUTION</span></div></div>
<div class="r" style="top:34px;color:#000080"><div class="xb"><svg width="14" height="14" viewBox="0 0 14 14"><path d="M3.5 3.5 L10.5 10.5 M10.5 3.5 L3.5 10.5" stroke="#000" stroke-width="2.4" fill="none"/></svg></div><div class="n"></div><div class="t" id="t2"><span class="c">預測模式</span></div></div>
<div class="r" style="top:51px;color:#ff0000"><div class="cb"><svg width="12" height="12" viewBox="0 0 12 12"><path d="M2.5 5.5 L4.8 8 L9.5 3.2" stroke="#000" stroke-width="1.9" fill="none"/></svg></div><div class="n">0.501</div><div class="t" id="t3"><span class="c">前列腺囊腫</span><span class="l" style="letter-spacing:0.584px">CYST &nbsp;OF THE &nbsp;PROSTATE</span></div></div>
<div class="r sel" style="top:68px;color:#ff0000"><div class="cb"><svg width="12" height="12" viewBox="0 0 12 12"><path d="M2.5 5.5 L4.8 8 L9.5 3.2" stroke="#000" stroke-width="1.9" fill="none"/></svg></div><div class="n">0.707</div><div class="t" id="t4"><span class="c">尿道炎</span><span class="l" style="letter-spacing:0.373px">URETHRITIS</span></div></div>
<div class="r" style="top:85px;color:#008000"><div class="cb"></div><div class="n">1.618</div><div class="t" id="t5"><span class="c">動脈粥樣硬化</span><span class="l" style="letter-spacing:0.183px">ATHEROSCLEROSES</span></div></div>
<div class="r" style="top:102px;color:#008000"><div class="cb"></div><div class="n">1.858</div><div class="t" id="t6"><span class="c">痔瘡</span><span class="l" style="letter-spacing:0.057px">HAEMORRHOIDS</span></div></div>
<div class="r" style="top:119px;color:#008000"><div class="cb"></div><div class="n">2.433</div><div class="t" id="t7"><span class="c">神經根病變</span><span class="l" style="letter-spacing:0.558px">RADICULOPATHY</span></div></div>
<div class="r" style="top:136px;color:#008000"><div class="cb"></div><div class="n">11.702</div><div class="t" id="t8"><span class="c">毒性過敏關節炎</span><span class="l" style="letter-spacing:0.358px"> TOXICOALLERGIC &nbsp;ARTHRITIS</span></div></div>
<div class="r" style="top:153px;color:#008000"><div class="cb"></div><div class="n inf">∞</div><div class="t" id="t9"><span class="c">睾丸炎</span><span class="l" style="letter-spacing:0.389px">ORCHITIS</span></div></div>
<div class="r" style="top:170px;color:#008000"><div class="cb"></div><div class="n inf">∞</div><div class="t" id="t10"><span class="c">附睾炎</span><span class="l" style="letter-spacing:0.541px">EPIDIDYMITIS</span></div></div>
<div class="r" style="top:187px;color:#008000"><div class="cb"></div><div class="n inf">∞</div><div class="t" id="t11"><span class="c">膀胱炎</span><span class="l" style="letter-spacing:0.738px">CYSTITIS</span></div></div>
<div class="r" style="top:204px;color:#008000"><div class="cb"></div><div class="n inf">∞</div><div class="t" id="t12"><span class="c">慢性疲勞綜合徵</span><span class="l" style="letter-spacing:0.127px">CHRONIC TIREDNESS SYNDROME</span></div></div>
<div class="r" style="top:221px;color:#008000"><div class="cb"></div><div class="n inf">∞</div><div class="t" id="t13"><span class="c">膀胱腎盂炎</span><span class="l" style="letter-spacing:0.648px">CYSTOPYELITIS</span></div></div>
<div class="r" style="top:238px;color:#008000"><div class="cb"></div><div class="n inf">∞</div><div class="t" id="t14"><span class="l" style="letter-spacing:0.417px">HYPERPHOSPHATURIA HYPERPHOSPHATURIA</span></div></div>
<div class="r" style="top:255px;color:#008000"><div class="cb"></div><div class="n inf">∞</div><div class="t" id="t15"><span class="c">無精子症</span><span class="l" style="letter-spacing:0.286px">AZOOSPERMIA</span></div></div>
<div class="r" style="top:272px;color:#008000"><div class="cb"></div><div class="n inf">∞</div><div class="t" id="t16"><span class="c">克羅恩病</span><span class="l" style="letter-spacing:0.184px">CRON'S &nbsp;DISEASE</span></div></div>
<div class="r" style="top:289px;color:#008000"><div class="cb"></div><div class="n inf">∞</div><div class="t" id="t17"><span class="c">痙攣性結腸炎</span><span class="l" style="letter-spacing:0.495px">SPASTIC &nbsp;COLITIS</span></div></div>
<div class="r" style="top:306px;color:#008000"><div class="cb"></div><div class="n inf">∞</div><div class="t" id="t18"><span class="c">椎關節病</span><span class="l" style="letter-spacing:0.300px">SPONDYLOARTHROSIS &nbsp;DEFORMANS</span></div></div>
<div class="r" style="top:323px;color:#008000"><div class="cb"></div><div class="n inf">∞</div><div class="t" id="t19"><span class="c">白塞氏綜合群</span><span class="l" style="letter-spacing:0.196px"> BECHET'S &nbsp;SYNDROME</span></div></div>
<div class="r" style="top:340px;color:#008000"><div class="cb"></div><div class="n inf">∞</div><div class="t" id="t20"><span class="c">神經痛</span><span class="l" style="letter-spacing:0.249px">NEURALGIA</span></div></div>
<div class="r" style="top:357px;color:#008000"><div class="cb"></div><div class="n inf">∞</div><div class="t" id="t21"><span class="c">骨關節變形病</span><span class="l" style="letter-spacing:0.287px">DEFORMING &nbsp;OSTEOARTHROSIS</span></div></div>
<div class="r" style="top:374px;color:#008000"><div class="cb"></div><div class="n inf">∞</div><div class="t" id="t22"><span class="c">乙狀結腸炎</span><span class="l" style="letter-spacing:0.387px">SIGMOIDITIS</span></div></div>
<div class="r" style="top:391px;color:#008000"><div class="cb"></div><div class="n inf">∞</div><div class="t" id="t23"><span class="c">氈狀綜合群</span><span class="l" style="letter-spacing:0.406px">FELTY'S SYNDROME</span></div></div>
<div class="r" style="top:408px;color:#008000"><div class="cb"></div><div class="n inf">∞</div><div class="t" id="t24"><span class="c">非特異性潰瘍結腸炎</span><span class="l" style="letter-spacing:0.298px">NON-SPECIFIC &nbsp;ULCERATED &nbsp;COLITIS</span></div></div>
<div class="r" style="top:425px;color:#008000"><div class="cb"></div><div class="n inf">∞</div><div class="t" id="t25"><span class="c">萊姆病</span><span class="l" style="letter-spacing:0.456px">LYME DISEASE</span></div></div>
<div class="r" style="top:442px;color:#008000"><div class="cb"></div><div class="n inf">∞</div><div class="t" id="t26"><span class="c">骨硬化</span><span class="l" style="letter-spacing:0.272px">OSTEOSCLEROSIS</span></div></div>
<div class="r" style="top:459px;color:#008000"><div class="cb"></div><div class="n inf">∞</div><div class="t" id="t27"><span class="c">過敏</span><span class="l" style="letter-spacing:0.313px">ALLERGY</span></div></div>
<div class="r" style="top:476px;color:#008000"><div class="cb"></div><div class="n inf">∞</div><div class="t" id="t28"><span class="c">脊椎變形</span><span class="l" style="letter-spacing:0.259px">SPONDYLOSIS &nbsp;DEFORMANS</span></div></div>
<div class="r" style="top:493px;color:#008000"><div class="cb"></div><div class="n inf">∞</div><div class="t" id="t29"><span class="c">紫癜</span><span class="l" style="letter-spacing:0.165px">,</span><span class="c">過敏性疾病</span><span class="l" style="letter-spacing:0.165px">SCHONLEIN-HENOCH &nbsp;DISEASE</span></div></div>
<div class="r" style="top:510px;color:#008000"><div class="cb"></div><div class="n inf">∞</div><div class="t" id="t30"><span class="c">關節焦磷酸鈣沉積病</span><span class="l" style="letter-spacing:0.431px">PIROPHOSPHORUS &nbsp;ARTHROPATHY</span></div></div>
<div class="r" style="top:527px;color:#008000"><div class="cb"></div><div class="n inf">∞</div><div class="t" id="t31"><span class="c">血小板減少性紫癜</span><span class="l" style="letter-spacing:0.384px">THROMBOCYTOPANIAL &nbsp;PURPURA</span></div></div>
<div class="r" style="top:544px;color:#008000"><div class="cb"></div><div class="n inf">∞</div><div class="t" id="t32"><span class="c">結節病</span><span class="l" style="letter-spacing:0.217px">SARCOIDOSIS</span></div></div>
<div class="r" style="top:561px;color:#008000"><div class="cb"></div><div class="n inf">∞</div><div class="t" id="t33"><span class="c">淋巴結炎</span><span class="l" style="letter-spacing:0.342px">MESOADENITIS</span></div></div>
  <div class="vl" style="left:16px;height:578px;background:#000"></div>
  <div class="vl" style="left:34px;height:578px;background:#c0c0c0"></div>
  <div class="vl" style="left:53px;height:578px;background:#c0c0c0"></div>
  <div class="vl" style="left:675px;height:578px;background:#c0c0c0"></div>
  <div class="vl" style="left:34px;height:51px;background:#000"></div>
  <div class="vl" style="left:53px;height:51px;background:#000"></div>
  <div class="vl" style="left:101px;height:51px;background:#000"></div>
  <div class="vl" style="left:118px;height:51px;background:#000"></div>
  <div class="vl" style="left:675px;height:51px;background:#000"></div>
  <div class="abs" style="left:0;top:16px;width:676px;height:1px;background:#000"></div>
  <div class="abs" style="left:0;top:33px;width:676px;height:1px;background:#000"></div>
  <div class="abs" style="left:0;top:50px;width:676px;height:1px;background:#000"></div>
  <div id="hl"></div>
  </div>
  <div id="sb"><div id="thumb"></div>
   <svg class="abs" style="left:0;top:0" width="18" height="578"><path d="M5.5 11 L9 7 L12.5 11 Z" fill="#383838"/><path d="M5.5 568 L12.5 568 L9 572 Z" fill="#404040"/></svg>
  </div>
 </div>
 <div class="btn bb" style="left:3px;top:587px;width:123px">標準圖譜說明</div>
 <div class="btn fix" style="left:144px;top:587px;width:124px">Fix</div>
 <div class="btn bb" style="left:286px;top:587px;width:124px">排序選項</div>
 <div class="btn bb" style="left:428px;top:587px;width:124px">選擇</div>
 <div class="btn bb" style="left:570px;top:587px;width:124px">群組</div>
</div>

<div class="panel" id="rp">
 <div class="sunk" id="list">
  <div style="position:absolute;left:0;top:0;width:306px;height:275px;overflow:hidden">
<div class="k" style="top:0px;color:#ff00ff"><div class="kb"></div><div class="kt t" id="k0"><span class="l" style="letter-spacing:0.591px">A </span><span class="c">＃組織器官</span><span class="l" style="letter-spacing:0.591px"> ORGANOPREPARATIONS</span></div></div>
<div class="k" style="top:20px;color:#0000ff"><div class="kb"></div><div class="kt t" id="k1"><span class="l" style="letter-spacing:0.537px">B</span><span class="c">＃生化動態平衡</span><span class="l" style="letter-spacing:0.537px">BIOCHEMICAL HOMEOSTASIS</span></div></div>
<div class="k" style="top:40px;color:#008000"><div class="kb"><svg width="9" height="9" viewBox="0 0 9 9" style="position:absolute;left:0;top:0"><path d="M1.3 4.2 L3.6 6.6 L7.8 1.6" stroke="#000" stroke-width="1.8" fill="none"/></svg></div><div class="kt t" id="k2"><span class="l" style="letter-spacing:0.597px">C</span><span class="c">＃病理形態分析</span><span class="l" style="letter-spacing:0.597px">PATHOMORPHOLOGY</span></div></div>
<div class="k" style="top:60px;color:#cc8033"><div class="kb"></div><div class="kt t" id="k3"><span class="l" style="letter-spacing:0.178px">D #</span><span class="c">過敏原</span><span class="l" style="letter-spacing:0.178px">ALLERGENS</span></div></div>
<div class="k" style="top:80px;color:#800080"><div class="kb"></div><div class="kt t" id="k4"><span class="l" style="letter-spacing:0.521px">E</span><span class="c">＃微生物和蠕蟲</span><span class="l" style="letter-spacing:0.521px">MICROORGANISMS AND HELMINTHS</span></div></div>
<div class="k" style="top:100px;color:#008080"><div class="kb"></div><div class="kt t" id="k5"><span class="l" style="letter-spacing:0.660px">F #</span><span class="c">對抗療法</span><span class="l" style="letter-spacing:0.660px">ALLOPATHY</span></div></div>
<div class="k" style="top:120px;color:#c05020"><div class="kb"></div><div class="kt t" id="k6"><span class="l" style="letter-spacing:0.522px">G #</span><span class="c">順勢療法</span><span class="l" style="letter-spacing:0.522px">HOMEOPATHY</span></div></div>
<div class="k" style="top:140px;color:#808080"><div class="kb"></div><div class="kt t" id="k7"><span class="l" style="letter-spacing:0.520px">H #</span><span class="c">植物療法</span><span class="l" style="letter-spacing:0.520px">PHYTOTHERAPY</span></div></div>
<div class="k" style="top:160px;color:#8c8c00"><div class="kb"></div><div class="kt t" id="k8"><span class="l" style="letter-spacing:0.521px">I</span><span class="c">＃營養品和天然藥品</span><span class="l" style="letter-spacing:0.521px">NUTRICEUTICALS and PARAPHARMACEUTICALS</span></div></div>
<div class="k" style="top:180px;color:#0030a0"><div class="kb"></div><div class="kt t" id="k9"><span class="l" style="letter-spacing:0.558px">J #</span><span class="c">食品</span><span class="l" style="letter-spacing:0.558px"> FOOD</span></div></div>
<div class="k" style="top:200px;color:#808040"><div class="kb"></div><div class="kt t" id="k10"><span class="l" style="letter-spacing:0.528px">K #</span><span class="c">礦石療法</span><span class="l" style="letter-spacing:0.528px">LITOTHER</span></div></div>
  </div>
 </div>
 <div id="chart"><svg width="307" height="304" viewBox="0 0 307 304" style="position:absolute;left:0;top:0">
<path d="M38.5 0V304M77.5 0V304M115.5 0V304M154.5 0V304M192.5 0V304M230.5 0V304M269.5 0V304M0 23.5H307M0 70.5H307M0 117.5H307M0 164.5H307M0 210.5H307M0 257.5H307" stroke="#008000" stroke-width="1" fill="none" shape-rendering="crispEdges"/>
<path d="M0.0 171.9 L0.5 171.7 L3.0 170.9 L6.0 169.8 L9.0 168.8 L12.0 167.7 L15.0 166.6 L18.0 165.4 L21.0 164.2 L24.0 163.0 L27.0 161.7 L30.0 160.5 L33.0 159.2 L36.0 157.8 L39.0 156.5 L42.0 155.1 L45.0 153.7 L48.0 152.2 L51.0 150.7 L54.0 149.2 L57.0 147.6 L60.0 146.0 L63.0 144.3 L66.0 142.7 L69.0 141.0 L72.0 139.2 L75.0 137.5 L77.5 136.0 L78.0 135.7 L81.0 133.9 L84.0 132.1 L87.0 130.3 L90.0 128.4 L93.0 126.5 L96.0 124.6 L99.0 122.6 L102.0 120.5 L105.0 118.4 L108.0 116.3 L111.0 114.0 L114.0 111.7 L116.0 110.1 L117.0 109.3 L120.0 106.3 L123.0 103.0 L126.0 99.2 L129.0 95.2 L132.0 91.2 L135.0 87.2 L138.0 83.4 L141.0 79.9 L144.0 76.8 L147.0 74.3 L150.0 72.5 L153.0 71.5 L154.5 71.4 L156.0 71.6 L159.0 72.7 L162.0 74.9 L165.0 77.8 L168.0 81.5 L171.0 85.7 L174.0 90.3 L177.0 95.1 L180.0 100.0 L183.0 104.8 L186.0 109.3 L189.0 113.4 L192.0 117.0 L193.0 118.0 L195.0 120.0 L198.0 123.2 L201.0 126.6 L204.0 130.0 L207.0 133.3 L210.0 136.6 L213.0 139.7 L216.0 142.5 L219.0 145.0 L222.0 147.1 L225.0 148.8 L228.0 149.8 L231.0 150.3 L231.5 150.3 L234.0 150.1 L237.0 149.4 L240.0 148.2 L243.0 146.7 L246.0 144.9 L249.0 143.0 L252.0 141.1 L255.0 139.2 L258.0 137.4 L261.0 135.8 L264.0 134.6 L267.0 133.8 L270.0 133.5 L273.0 133.5 L276.0 133.5 L279.0 133.6 L282.0 133.6 L285.0 133.7 L288.0 133.9 L291.0 134.2 L294.0 134.5 L297.0 134.9 L300.0 135.5 L303.0 136.1 L306.0 136.9 L307.0 137.2" stroke="#ff0000" stroke-width="2" fill="none" stroke-linejoin="round" shape-rendering="crispEdges"/>
<path d="M0.0 188.5 L0.5 187.8 L3.0 184.5 L6.0 180.5 L9.0 176.6 L12.0 172.6 L15.0 168.6 L18.0 164.6 L21.0 160.7 L24.0 156.7 L27.0 152.7 L30.0 148.7 L33.0 144.7 L36.0 140.7 L39.0 136.7 L42.0 132.4 L45.0 127.6 L48.0 122.5 L51.0 117.2 L54.0 111.9 L57.0 106.6 L60.0 101.6 L63.0 97.0 L66.0 92.9 L69.0 89.6 L72.0 87.1 L75.0 85.5 L77.5 85.1 L78.0 85.1 L81.0 85.6 L84.0 86.7 L87.0 88.4 L90.0 90.5 L93.0 93.1 L96.0 96.0 L99.0 99.1 L102.0 102.5 L105.0 105.9 L108.0 109.3 L111.0 112.7 L114.0 115.9 L116.0 118.0 L117.0 119.0 L120.0 122.6 L123.0 126.7 L126.0 131.2 L129.0 135.9 L132.0 140.8 L135.0 145.5 L138.0 150.0 L141.0 154.2 L144.0 157.8 L147.0 160.8 L150.0 162.9 L153.0 164.1 L154.5 164.2 L156.0 163.9 L159.0 162.0 L162.0 158.5 L165.0 153.7 L168.0 147.8 L171.0 141.3 L174.0 134.4 L177.0 127.4 L180.0 120.6 L183.0 114.4 L186.0 109.0 L189.0 104.8 L192.0 102.0 L193.0 101.5 L195.0 100.6 L198.0 99.4 L201.0 98.2 L204.0 97.1 L207.0 96.1 L210.0 95.1 L213.0 94.3 L216.0 93.5 L219.0 92.9 L222.0 92.4 L225.0 92.0 L228.0 91.8 L231.0 91.7 L231.5 91.7 L234.0 91.8 L237.0 92.1 L240.0 92.6 L243.0 93.2 L246.0 94.1 L249.0 95.0 L252.0 96.1 L255.0 97.3 L258.0 98.5 L261.0 99.8 L264.0 101.2 L267.0 102.5 L270.0 103.9 L273.0 105.4 L276.0 107.0 L279.0 108.8 L282.0 110.8 L285.0 113.0 L288.0 115.3 L291.0 117.7 L294.0 120.3 L297.0 123.0 L300.0 125.8 L303.0 128.6 L306.0 131.6 L307.0 132.6" stroke="#0000ff" stroke-width="2" fill="none" stroke-linejoin="round" shape-rendering="crispEdges"/>
<path d="M0.0 187.2 L0.5 185.5 L3.0 177.3 L6.0 167.8 L9.0 158.8 L12.0 150.4 L15.0 142.5 L18.0 135.3 L21.0 128.8 L24.0 123.2 L27.0 118.4 L30.0 114.6 L33.0 111.7 L36.0 110.0 L39.0 109.4 L42.0 109.9 L45.0 111.2 L48.0 113.3 L51.0 115.8 L54.0 118.8 L57.0 122.0 L60.0 125.2 L63.0 128.4 L66.0 131.3 L69.0 133.8 L72.0 135.8 L75.0 137.0 L77.5 137.3 L78.0 137.3 L81.0 136.4 L84.0 134.4 L87.0 131.4 L90.0 127.6 L93.0 123.3 L96.0 118.7 L99.0 113.9 L102.0 109.2 L105.0 104.7 L108.0 100.8 L111.0 97.5 L114.0 95.0 L116.0 94.0 L117.0 93.6 L120.0 92.5 L123.0 91.4 L126.0 90.4 L129.0 89.5 L132.0 88.6 L135.0 87.8 L138.0 87.1 L141.0 86.4 L144.0 85.9 L147.0 85.5 L150.0 85.3 L153.0 85.1 L154.5 85.1 L156.0 85.2 L159.0 85.9 L162.0 87.2 L165.0 89.0 L168.0 91.3 L171.0 93.9 L174.0 96.7 L177.0 99.7 L180.0 102.7 L183.0 105.7 L186.0 108.5 L189.0 111.1 L192.0 113.4 L193.0 114.1 L195.0 115.5 L198.0 117.6 L201.0 119.9 L204.0 122.2 L207.0 124.5 L210.0 126.8 L213.0 128.9 L216.0 130.9 L219.0 132.7 L222.0 134.2 L225.0 135.3 L228.0 136.1 L231.0 136.4 L231.5 136.4 L234.0 136.1 L237.0 135.0 L240.0 133.2 L243.0 130.8 L246.0 128.1 L249.0 125.2 L252.0 122.2 L255.0 119.2 L258.0 116.5 L261.0 114.1 L264.0 112.2 L267.0 110.9 L270.0 110.5 L273.0 110.7 L276.0 111.2 L279.0 112.1 L282.0 113.3 L285.0 114.8 L288.0 116.7 L291.0 118.9 L294.0 121.4 L297.0 124.3 L300.0 127.4 L303.0 131.0 L306.0 134.8 L307.0 136.1" stroke="#ffa32e" stroke-width="2" fill="none" stroke-linejoin="round" shape-rendering="crispEdges"/>
<path d="M0.0 170.3 L0.5 170.2 L3.0 169.7 L6.0 169.0 L9.0 168.5 L12.0 167.9 L15.0 167.5 L18.0 167.0 L21.0 166.6 L24.0 166.3 L27.0 166.0 L30.0 165.8 L33.0 165.6 L36.0 165.5 L39.0 165.5 L42.0 165.6 L45.0 165.7 L48.0 165.9 L51.0 166.2 L54.0 166.5 L57.0 166.9 L60.0 167.2 L63.0 167.5 L66.0 167.9 L69.0 168.1 L72.0 168.3 L75.0 168.5 L77.5 168.5 L78.0 168.5 L81.0 168.0 L84.0 166.8 L87.0 165.1 L90.0 163.0 L93.0 160.7 L96.0 158.1 L99.0 155.5 L102.0 153.0 L105.0 150.7 L108.0 148.8 L111.0 147.3 L114.0 146.3 L116.0 146.1 L117.0 146.1 L120.0 146.0 L123.0 145.9 L126.0 145.8 L129.0 145.7 L132.0 145.6 L135.0 145.6 L138.0 145.5 L141.0 145.5 L144.0 145.5 L147.0 145.4 L150.0 145.4 L153.0 145.4 L154.5 145.4 L156.0 145.6 L159.0 146.8 L162.0 149.1 L165.0 152.3 L168.0 156.1 L171.0 160.2 L174.0 164.6 L177.0 169.0 L180.0 173.1 L183.0 176.8 L186.0 179.8 L189.0 182.0 L192.0 183.0 L193.0 183.1 L195.0 182.8 L198.0 181.3 L201.0 178.8 L204.0 175.4 L207.0 171.5 L210.0 167.2 L213.0 162.7 L216.0 158.2 L219.0 154.1 L222.0 150.4 L225.0 147.4 L228.0 145.4 L231.0 144.5 L231.5 144.5 L234.0 144.6 L237.0 145.0 L240.0 145.7 L243.0 146.7 L246.0 147.9 L249.0 149.3 L252.0 150.8 L255.0 152.5 L258.0 154.3 L261.0 156.2 L264.0 158.1 L267.0 160.1 L270.0 162.0 L273.0 164.1 L276.0 166.4 L279.0 169.0 L282.0 171.9 L285.0 174.9 L288.0 178.2 L291.0 181.7 L294.0 185.3 L297.0 189.1 L300.0 193.1 L303.0 197.2 L306.0 201.3 L307.0 202.8" stroke="#c000ff" stroke-width="2" fill="none" stroke-linejoin="round" shape-rendering="crispEdges"/>
</svg></div>
 <div class="btn bb" style="left:7px;top:587px;width:124px">圖表選項</div>
 <div class="btn bb" style="left:176px;top:587px;width:124px">逆轉</div>
</div>
</body></html>
